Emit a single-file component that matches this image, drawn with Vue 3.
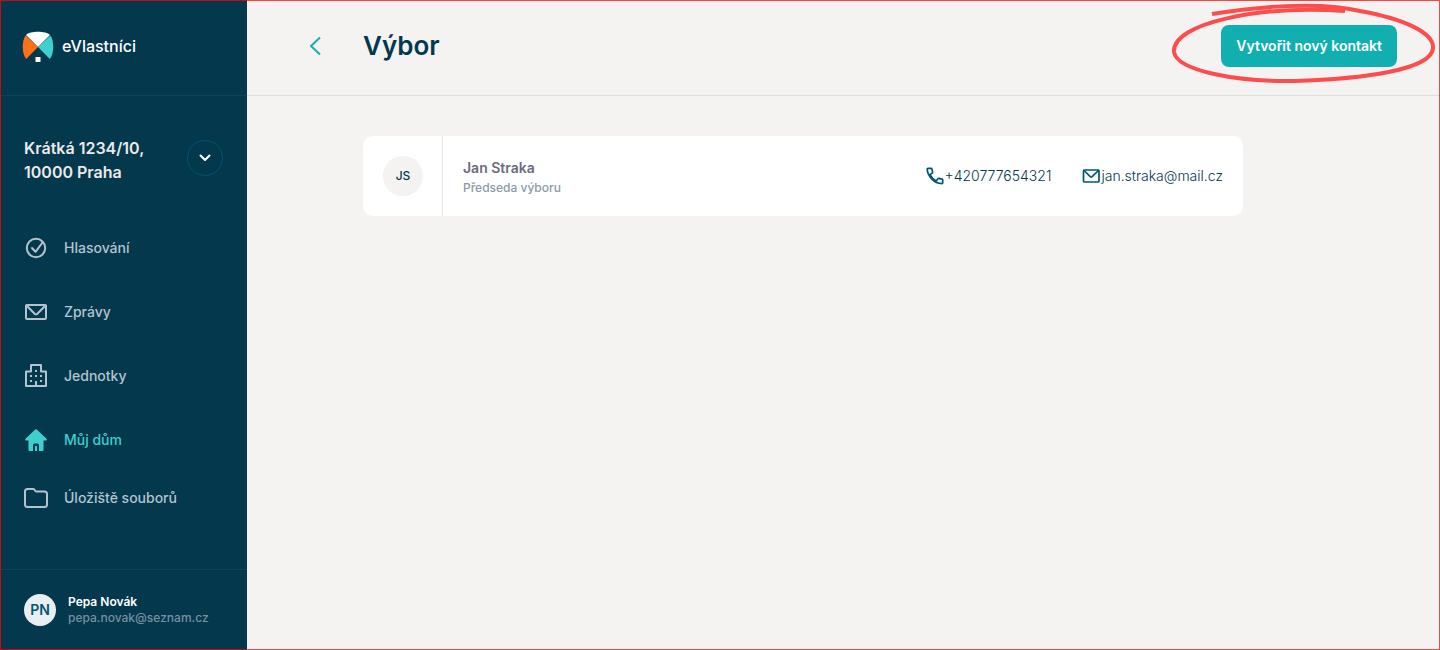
<script setup>
const nav = [
  { label: 'Hlasování', icon: 'check' },
  { label: 'Zprávy', icon: 'mail' },
  { label: 'Jednotky', icon: 'building' },
  { label: 'Můj dům', icon: 'home', active: true },
  { label: 'Úložiště souborů', icon: 'folder' },
]
</script>

<template>
  <div class="app">
    <aside class="sidebar">
      <div class="brand">
        <svg class="logo" width="32" height="32" viewBox="0 0 32 32" aria-hidden="true">
          <path d="M4 4C8-.2 24-.2 28 4L16 16Z" fill="#fff" />
          <path d="M3.600 4.400C-.4 10-.2 23 4.200 28L16 16Z" fill="#ff6f1a" />
          <path d="M28.400 4.400C32.400 10 32.200 23 27.800 28L16 16Z" fill="#3ecfcf" />
          <path d="M13.500 26h5v5h-5z" fill="#fff" />
        </svg>
        <span>eVlastníci</span>
      </div>

      <div class="house">
        <div class="address">Krátká 1234/10,<br />10000 Praha</div>
        <button class="switch" type="button" aria-label="Změnit dům">
          <svg width="12" height="8" viewBox="0 0 12 8" fill="none" stroke="#fff" stroke-width="2" stroke-linecap="round" stroke-linejoin="round"><path d="M1.500 1.500 6 6l4.500-4.500" /></svg>
        </button>
      </div>

      <nav class="nav">
        <a v-for="item in nav" :key="item.label" href="#" class="link" :class="{ active: item.active, last: item.icon === 'folder' }">
          <svg v-if="item.icon === 'check'" width="24" height="24" viewBox="0 0 24 24" fill="none" stroke="currentColor" stroke-width="2" stroke-linecap="round" stroke-linejoin="round">
            <circle cx="12" cy="12" r="9.200" /><path d="m8 12 3.500 3.800L18.500 6.500" />
          </svg>
          <svg v-else-if="item.icon === 'mail'" width="24" height="24" viewBox="0 0 24 24" fill="none" stroke="currentColor" stroke-width="2" stroke-linecap="round" stroke-linejoin="round">
            <rect x="2" y="5" width="20" height="14" rx="1" /><path d="m2.500 5.500 8.400 8.500q1.100 1 2.200 0l8.400-8.500" />
          </svg>
          <svg v-else-if="item.icon === 'building'" width="24" height="24" viewBox="0 0 24 24" fill="none" stroke="currentColor" stroke-width="2" stroke-linejoin="round">
            <path d="M2 22V7.500h5V1h10v6.500h5V22zM12 17v5" />
            <path d="M11 6h2v2h-2zM6 11h2v2H6zm5 0h2v2h-2zm5 0h2v2h-2zM6 16h2v2H6zm10 0h2v2h-2z" fill="currentColor" stroke="none" />
          </svg>
          <svg v-else-if="item.icon === 'home'" width="24" height="24" viewBox="0 0 24 24" fill="currentColor">
            <path d="M11.200 1.600q.8-.7 1.600 0l9.700 9.200q1.100 1.400-.5 1.700h-2.500V22q0 1-1 1H15v-6q0-1.500-1.500-1.500h-3Q9 15.500 9 17v6H5.500q-1 0-1-1v-9.500H2q-1.600-.3-.5-1.700z" /><path d="M11 18h2v5h-2z" />
          </svg>
          <svg v-else width="24" height="24" viewBox="0 0 24 24" fill="none" stroke="currentColor" stroke-width="2" stroke-linejoin="round">
            <path d="M1 5.500Q1 3 3.500 3H9q1.400 0 2 1.400.6 1.100 2 1.100h7.500Q23 5.500 23 8v10.500q0 2.500-2.500 2.500h-17Q1 21 1 18.500z" />
          </svg>
          <span>{{ item.label }}</span>
        </a>
      </nav>

      <div class="user">
        <span class="avatar">PN</span>
        <div>
          <div class="user-name">Pepa Novák</div>
          <div class="user-mail">pepa.novak@seznam.cz</div>
        </div>
      </div>
    </aside>

    <main class="main">
      <header class="header">
        <a class="back" href="#" aria-label="Zpět">
          <svg width="12" height="20" viewBox="0 0 12 20" fill="none" stroke="#13b0b0" stroke-width="2" stroke-linejoin="round"><path d="M11 1.500 2 10l9 8.500" /></svg>
        </a>
        <h1>Výbor</h1>
        <div class="action">
          <button class="create" type="button">Vytvořit nový kontakt</button>
          <svg class="scribble" width="268" height="84" viewBox="0 0 268 84" fill="none" stroke="#fd4c4c" stroke-width="4" aria-hidden="true">
            <path d="M42 12C85 5 147-1 190 9C235 17 264 31 263 46C262 68 192 77 124 79C68 80 7 69 4 50C2 21 90 3 175 9" />
          </svg>
        </div>
      </header>

      <section class="content">
        <article class="card">
          <div class="initials"><span>JS</span></div>
          <div class="person">
            <div class="name">Jan Straka</div>
            <div class="role">Předseda výboru</div>
          </div>
          <a class="contact" href="tel:+420777654321">
            <svg width="20" height="20" viewBox="0 0 20 20" fill="none" stroke="#005673" stroke-width="1.700" stroke-linecap="round" stroke-linejoin="round">
              <path d="M3 2.300h3q.7 0 .9.700l.7 2.900q.1.700-.4 1.100L5 8.700Q7 12.800 11.200 15l1.700-2.200q.4-.5 1.100-.4l3 .7q.7.200.7.900v2.800q0 .8-.8.800Q11 17.300 6.600 12.800 2.300 8.300 2.200 3.100q0-.8.8-.8z" />
            </svg>
            <span>+420777654321</span>
          </a>
          <a class="contact" href="mailto:jan.straka@mail.cz">
            <svg width="20" height="20" viewBox="0 0 20 20" fill="none" stroke="#005673" stroke-width="1.700" stroke-linecap="round" stroke-linejoin="round">
              <rect x="2.500" y="4" width="15.500" height="12" rx="1" /><path d="m3 4.500 6.300 6.200q.9.800 1.800 0l6.400-6.200" />
            </svg>
            <span>jan.straka@mail.cz</span>
          </a>
        </article>
      </section>
    </main>
  </div>
</template>

<style>
body {
  margin: 0;
}
</style>

<style scoped>
.app {
  position: relative;
  display: flex;
  min-height: 100vh;
  background: #f5f3f2;
  font-family: Inter, 'Liberation Sans', sans-serif;
  color: #04384d;
}
.app::after {
  content: '';
  position: absolute;
  inset: 0;
  border: 1px solid rgba(255, 0, 0, 0.72);
  pointer-events: none;
}
a {
  color: inherit;
  text-decoration: none;
}
button {
  border: 0;
  padding: 0;
  font-family: inherit;
}
svg {
  display: block;
  flex: none;
}
.sidebar {
  flex: 0 0 247px;
  box-sizing: border-box;
  display: flex;
  flex-direction: column;
  background: #04384d;
}
.brand {
  display: flex;
  align-items: center;
  gap: 8px;
  box-sizing: border-box;
  height: 96px;
  padding: 0 22px 2px;
  border-bottom: 1px solid #06475f;
  color: #fff;
  font-size: 16px;
  line-height: 20px;
  font-weight: 500;
}
.brand span {
  padding-bottom: 2px;
}
.house {
  display: flex;
  align-items: center;
  justify-content: space-between;
  padding: 40px 24px 0;
}
.address {
  color: #ebeae9;
  font-size: 16px;
  line-height: 24px;
  font-weight: 600;
}
.switch {
  display: flex;
  align-items: center;
  justify-content: center;
  width: 36px;
  height: 36px;
  margin-bottom: 4px;
  border: 1px solid #005673;
  border-radius: 50%;
  background: transparent;
}
.nav {
  display: flex;
  flex-direction: column;
  gap: 40px;
  padding: 52px 24px 24px;
}
.link {
  display: flex;
  align-items: center;
  gap: 16px;
  color: #b4c3cd;
  font-size: 14px;
  line-height: 24px;
  font-weight: 500;
}
.link.active {
  color: #3ecfcf;
}
.link.last {
  margin-top: -6px;
}
.user {
  display: flex;
  align-items: center;
  gap: 12px;
  margin-top: auto;
  padding: 24px;
  border-top: 1px solid #06475f;
  font-size: 12px;
  line-height: 16px;
}
.avatar {
  display: flex;
  align-items: center;
  justify-content: center;
  width: 32px;
  height: 32px;
  border-radius: 50%;
  background: #e8eef1;
  color: #005673;
  font-size: 14px;
  font-weight: 600;
}
.user-name {
  color: #fff;
  font-weight: 600;
}
.user-mail {
  color: #7690a3;
  font-weight: 500;
}
.main {
  flex: 1;
  min-width: 0;
}
.header {
  display: flex;
  align-items: center;
  box-sizing: border-box;
  height: 96px;
  padding: 0 43px 4px 62px;
  border-bottom: 1px solid #dededc;
}
.back {
  width: 12px;
}
h1 {
  flex: 1;
  margin: 0 0 0 42px;
  font-size: 26px;
  line-height: 32px;
  font-weight: 600;
}
.action {
  position: relative;
}
.create {
  display: block;
  height: 42px;
  padding: 0 15px;
  border-radius: 8px;
  background: #11afb0;
  color: #fff;
  font-size: 14px;
  font-weight: 600;
}
.scribble {
  position: absolute;
  top: -23px;
  right: -41px;
  pointer-events: none;
}
.content {
  padding: 40px 116px;
}
.card {
  display: flex;
  align-items: center;
  max-width: 880px;
  height: 80px;
  border-radius: 10px;
  background: #fff;
}
.initials {
  display: flex;
  align-items: center;
  align-self: stretch;
  padding: 0 19px 0 20px;
  border-right: 1px solid #e6e5e3;
}
.initials span {
  width: 40px;
  border-radius: 50%;
  background: #f5f3f2;
  font-size: 12px;
  line-height: 40px;
  font-weight: 500;
  text-align: center;
}
.person {
  flex: 1;
  padding: 4px 0 0 20px;
  line-height: 20px;
}
.name {
  color: #6a6c80;
  font-size: 14px;
  font-weight: 600;
}
.role {
  color: #8b9aa7;
  font-size: 12px;
  font-weight: 500;
}
.contact {
  display: flex;
  align-items: center;
  margin-right: 20px;
  font-size: 14px;
  line-height: 20px;
  font-weight: 300;
}
.contact + .contact {
  margin-left: 10px;
}
</style>
